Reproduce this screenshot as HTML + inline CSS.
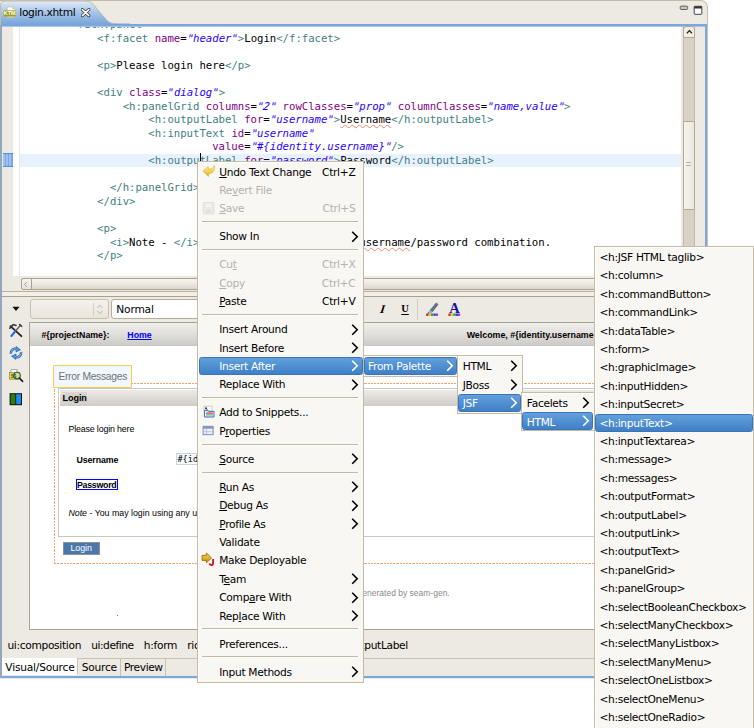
<!DOCTYPE html><html><head><meta charset="utf-8"><title>login.xhtml</title><style>
*{box-sizing:border-box;margin:0;padding:0}
html,body{width:754px;height:728px;overflow:hidden;background:#fff}
body{position:relative;font-family:"DejaVu Sans","Liberation Sans",sans-serif;font-size:10.67px;color:#000}
.abs{position:absolute}
#win{position:absolute;left:0;top:0;width:708px;height:678.5px;background:#ede9e3;border-top-right-radius:7px;overflow:hidden}
#tabbar{position:absolute;left:0;top:0;width:708px;height:24.5px;background:#ede9e3;border-top:1px solid #c4bba6;border-right:1px solid #c4bba6;border-top-right-radius:7px}
#frame{position:absolute;left:0.8px;top:23.5px;width:706.5px;height:654.3px;border:2px solid #7ba7dc;border-top-width:2.7px;border-bottom-width:2px;border-left-width:1.6px;border-right-width:2.3px;background:#ede9e3}
#edgeL{position:absolute;left:0;top:6px;width:0.9px;height:672px;background:#aaa69e}
#edgeR{position:absolute;left:707.2px;top:6px;width:0.8px;height:672px;background:#c9c0ad}
#editor{position:absolute;left:2.4px;top:26.3px;width:678.2px;height:249.7px;background:#fff;overflow:hidden}
#gutter{position:absolute;left:0;top:0;width:10.4px;height:100%;background:#ede9e3}
#gline{position:absolute;left:16.7px;top:0;width:0.9px;height:100%;background:#ece7df}
.code{position:absolute;left:18.0px;white-space:pre;font-family:"DejaVu Sans Mono","Liberation Mono",monospace;font-size:10.67px;line-height:13.6px;height:13.6px;letter-spacing:-0.023px}
.q{display:inline-block;transform:skewX(-11deg)}
.t{color:#3f7f7f}.a{color:#7f007f}.v{color:#2a00ff;font-style:italic}
.sq{text-decoration:underline wavy #ec8a70 0.45px;text-underline-offset:0.6px}
#curline{position:absolute;left:17.6px;top:127.5px;width:661px;height:13.5px;background:#e8f2fe}
.menu{position:absolute;background:#f9f7f3;border:1px solid #c5baa2;box-shadow:inset 1px 1px 0 #fff;}
.mi{position:absolute;left:0;right:0;height:18.4px;line-height:18.4px;white-space:pre}
.mi .lbl{position:absolute;top:0.8px}
.mi .acc{position:absolute;top:0.8px;right:7.6px}
.dis{color:#b5b2ac}
.hl{position:absolute;border:1px solid #3b74b8;border-radius:2.5px;background:linear-gradient(#62a0dc,#3f7fc6)}
.sep{position:absolute;height:2.1px;background:linear-gradient(#c3b8a2 0 62%,#fff 62%)}
u{text-decoration:underline;text-underline-offset:1.2px;text-decoration-thickness:0.8px}
.pg{font-family:"Liberation Sans",sans-serif}
</style></head><body>
<div id="win">
<div id="tabbar"></div>
<div id="edgeL"></div><div id="edgeR"></div><div id="frame"></div>
<svg class="abs" style="left:0;top:0" width="130" height="25" viewBox="0 0 130 25">
<defs><linearGradient id="tg" x1="0" y1="0" x2="0" y2="1"><stop offset="0" stop-color="#e3edf9"/><stop offset="0.45" stop-color="#a9c7ea"/><stop offset="1" stop-color="#76a3d8"/></linearGradient></defs>
<path d="M0,25 L0,6 Q0,0.7 5,0.7 L85,0.7 C91,0.7 93.5,4 96.5,8 L106.5,19.6 C109,22.6 111.5,23.5 117,23.5 L130,23.5 L130,25 Z" fill="url(#tg)"/>
<path d="M0.5,25 L0.5,6 Q0.5,1.1 5,1.1 L85,1.1 C91,1.1 93.5,4.4 96.5,8.4 L106.5,20 C109,23 111.5,23.6 117,23.6" fill="none" stroke="#c4bba6" stroke-width="1"/>
</svg>
<div class="abs" style="left:19.3px;top:5.6px;line-height:13px;font-size:10.67px;letter-spacing:-0.36px">login.xhtml</div>
<svg class="abs" style="left:2.5px;top:5.5px" width="14" height="13" viewBox="0 0 14 13">
<path d="M4.2,0.9 h5 l2.2,2.2 v8.4 h-7.2z" fill="#fff" stroke="#c8bc98" stroke-width="0.7"/>
<path d="M9.2,0.9 l2.2,2.2 h-2.2z" fill="#e8c860"/>
<rect x="0.6" y="4.6" width="12.2" height="5.8" rx="0.8" fill="#9c9c20" stroke="#b4b44a" stroke-width="0.5"/>
<text x="6.7" y="9.4" font-family="Liberation Sans,sans-serif" font-weight="bold" font-size="5.4" fill="#fff" text-anchor="middle">KTM</text>
</svg>
<svg class="abs" style="left:80.6px;top:7.6px" width="10" height="10" viewBox="0 0 10 10">
<path d="M1.4,1.6 L7.8,7.6 M7.8,1.6 L1.4,7.6" stroke="#3a3a3a" stroke-width="3.1" stroke-linecap="round"/>
<path d="M1.4,1.6 L7.8,7.6 M7.8,1.6 L1.4,7.6" stroke="#fff" stroke-width="1.5" stroke-linecap="round"/>
</svg>
<svg class="abs" style="left:678px;top:4px" width="27" height="13" viewBox="0 0 27 13">
<rect x="2.2" y="2.1" width="7.4" height="3.4" rx="1" fill="#c9c5bd" stroke="#555" stroke-width="0.9"/>
<rect x="16.2" y="2.3" width="7.6" height="8" rx="0.5" fill="#fff" stroke="#333" stroke-width="0.9"/>
<rect x="16.2" y="2.3" width="7.6" height="2.2" fill="#333"/>
</svg>
<div id="editor"><div id="gutter"></div><div id="gline"></div><div id="curline"></div>
<div class="code" style="top:-8.30px">        <span class="t">&lt;rich:panel&gt;</span></div>
<div class="code" style="top:5.30px">            <span class="t">&lt;f:facet</span> <span class="a">name</span>=<span class="v"><span class="q">"</span>header<span class="q">"</span></span><span class="t">&gt;</span>Login<span class="t">&lt;/f:facet&gt;</span></div>
<div class="code" style="top:32.50px">            <span class="t">&lt;p&gt;</span>Please login here<span class="t">&lt;/p&gt;</span></div>
<div class="code" style="top:59.70px">            <span class="t">&lt;div</span> <span class="a">class</span>=<span class="v"><span class="q">"</span>dialog<span class="q">"</span></span><span class="t">&gt;</span></div>
<div class="code" style="top:73.30px">                <span class="t">&lt;h:panelGrid</span> <span class="a">columns</span>=<span class="v"><span class="q">"</span><span class="q">2</span><span class="q">"</span></span> <span class="a">rowClasses</span>=<span class="v"><span class="q">"</span>prop<span class="q">"</span></span> <span class="a">columnClasses</span>=<span class="v"><span class="q">"</span>name,value<span class="q">"</span></span><span class="t">&gt;</span></div>
<div class="code" style="top:86.90px">                    <span class="t">&lt;h:outputLabel</span> <span class="a">for</span>=<span class="v"><span class="q">"</span>username<span class="q">"</span></span><span class="t">&gt;</span><span class="sq">Username</span><span class="t">&lt;/h:outputLabel&gt;</span></div>
<div class="code" style="top:100.50px">                    <span class="t">&lt;h:inputText</span> <span class="a">id</span>=<span class="v"><span class="q">"</span>username<span class="q">"</span></span></div>
<div class="code" style="top:114.10px">                              <span class="a">value</span>=<span class="v"><span class="q">"</span>#{identity.username}<span class="q">"</span></span><span class="t">/&gt;</span></div>
<div class="code" style="top:127.70px">                    <span class="t">&lt;h:outputLabel</span> <span class="a">for</span>=<span class="v"><span class="q">"</span>password<span class="q">"</span></span><span class="t">&gt;</span>Password<span class="t">&lt;/h:outputLabel&gt;</span></div>
<div class="code" style="top:154.90px">              <span class="t">&lt;/h:panelGrid&gt;</span></div>
<div class="code" style="top:168.50px">            <span class="t">&lt;/div&gt;</span></div>
<div class="code" style="top:195.70px">            <span class="t">&lt;p&gt;</span></div>
<div class="code" style="top:209.30px">              <span class="t">&lt;i&gt;</span>Note - <span class="t">&lt;/i&gt;</span> You may login using any <span class="sq">username</span>/password combination.</div>
<div class="code" style="top:222.90px">            <span class="t">&lt;/p&gt;</span></div>
<div class="abs" style="left:197.6px;top:126.7px;width:1.3px;height:13px;background:#000"></div>
<div class="abs" style="left:0.9px;top:127.2px;width:9.6px;height:13.9px;background:#85b3ea;border-top:1.1px solid #4d8ddb;border-bottom:1.1px solid #4d8ddb;background-image:repeating-linear-gradient(90deg,rgba(255,255,255,0.18) 0 1.6px,rgba(40,100,200,0.12) 1.6px 3.2px)"></div>
</div>
<div class="abs" style="left:2.4px;top:26px;width:702.6px;height:1px;background:#a9c6ea"></div>
<div class="abs" style="left:683.2px;top:26.4px;width:11.6px;height:250px;background:#d9d1c5;border-left:1px solid #c3b9a6;border-right:1px solid #c3b9a6"></div>
<div class="abs" style="left:683.2px;top:26.4px;width:11.6px;height:11.8px;background:#f1eee8;border:1px solid #b3a890;border-radius:3px 3px 0 0"></div>
<svg class="abs" style="left:685.6px;top:29.3px" width="7" height="6" viewBox="0 0 7 6"><path d="M0.9,4.3 L3.4,1.6 L5.9,4.3" fill="none" stroke="#222" stroke-width="1.3"/></svg>
<div class="abs" style="left:683.2px;top:120.6px;width:11.6px;height:89.6px;background:linear-gradient(90deg,#f6f4ef,#ebe7df);border:1px solid #b3a890;border-radius:1.5px"></div>
<div class="abs" style="left:686.3px;top:161.5px;width:5px;height:5px;background:repeating-linear-gradient(#b9b0a0 0 0.8px,transparent 0.8px 1.6px)"></div>
<div class="abs" style="left:20.5px;top:278.3px;width:675px;height:11.8px;background:linear-gradient(#f7f5f1,#ece8e1 50%,#ddd7cd);border:1px solid #aba18c;border-radius:2.5px"></div>
<div class="abs" style="left:20.5px;top:278.3px;width:11.2px;height:11.8px;border:1px solid #aba18c;border-radius:2.5px 0 0 2.5px;background:linear-gradient(#f7f5f1,#e6e2da)"></div>
<svg class="abs" style="left:23px;top:281px" width="6" height="7" viewBox="0 0 6 7"><path d="M4,0.8 L1.6,3.4 L4,6" fill="none" stroke="#aaa498" stroke-width="1"/></svg>
<div class="abs" style="left:2px;top:290.8px;width:703px;height:1.1px;background:#b9b09f"></div>
<div class="abs" style="left:2px;top:292px;width:703px;height:4px;background:#f2efe9"></div>
<div class="abs" style="left:2px;top:295.8px;width:703px;height:1.2px;background:#aaa08c"></div>
<svg class="abs" style="left:12px;top:306px" width="9" height="6" viewBox="0 0 9 6"><path d="M0.4,0.7 L7.6,0.7 L4,4.9 Z" fill="#111"/></svg>
<div class="abs" style="left:29.6px;top:299.4px;width:79.6px;height:19.9px;background:linear-gradient(#f4f2ed,#e9e5dd);border:1px solid #c9c0ae;border-radius:3px"></div>
<div class="abs" style="left:92.5px;top:302.5px;width:1px;height:13.5px;background:#d5cdbd"></div>
<svg class="abs" style="left:95.5px;top:303px" width="8" height="13" viewBox="0 0 8 13"><path d="M1.3,5 L3.8,2.2 L6.3,5 M1.3,8 L3.8,10.8 L6.3,8" fill="none" stroke="#b5aea0" stroke-width="0.9"/></svg>
<div class="abs" style="left:111.2px;top:299.4px;width:249px;height:19.9px;background:#fff;border:1px solid #b5ab98;border-radius:3px"></div>
<div class="abs" style="left:116.3px;top:302.8px;line-height:13px;letter-spacing:-0.2px">Normal</div>
<div class="abs" style="left:378px;top:302.5px;width:9px;line-height:13px;font-family:'Liberation Serif',serif;font-weight:bold;font-style:italic;font-size:12px;text-align:center;transform:skewX(-8deg)">I</div>
<div class="abs" style="left:400px;top:302.2px;width:10px;line-height:13px;font-family:'Liberation Serif',serif;font-weight:bold;font-size:10.5px;text-align:center;text-decoration:underline;text-underline-offset:1.5px">U</div>
<div class="abs" style="left:417px;top:299px;width:1px;height:21px;background:#d3cbbb"></div>
<svg class="abs" style="left:425px;top:301px" width="40" height="17" viewBox="0 0 40 17">
<path d="M5.2,9.2 L11.2,2 L13,3.4 L7.4,10.8 Z" fill="#6a7488" stroke="#3b4560" stroke-width="0.6"/>
<path d="M3,11.8 L5.2,9.2 L7.4,10.8 L5,12.6 Z" fill="#8fc4ee" stroke="#4a7ab0" stroke-width="0.5"/>
<path d="M2.2,12.8 L3.4,11.4 L4.4,12.2 Z" fill="#333"/>
<rect x="1.2" y="12.5" width="2.4" height="2.4" fill="#e01818"/><rect x="3.6" y="12.5" width="2.4" height="2.4" fill="#e8c818"/><rect x="6" y="12.5" width="2.4" height="2.4" fill="#28b028"/><rect x="8.4" y="12.5" width="2.4" height="2.4" fill="#2848e8"/><rect x="10.8" y="12.5" width="2.2" height="2.4" fill="#c028d8"/>
<text x="29.4" y="11.8" font-family="Liberation Serif,serif" font-weight="bold" font-size="14.5" fill="#14149c" text-anchor="middle">A</text>
<rect x="23.4" y="12.5" width="2.4" height="2.4" fill="#e01818"/><rect x="25.8" y="12.5" width="2.4" height="2.4" fill="#e8c818"/><rect x="28.2" y="12.5" width="2.4" height="2.4" fill="#28b028"/><rect x="30.6" y="12.5" width="2.4" height="2.4" fill="#2848e8"/><rect x="33" y="12.5" width="2.2" height="2.4" fill="#c028d8"/>
</svg>
<svg class="abs" style="left:8px;top:322px" width="17" height="86" viewBox="0 0 17 86">
<g stroke-linecap="round">
<path d="M2.4,4.2 L13.4,14.2" stroke="#222" stroke-width="1.8"/>
<path d="M1.8,6.2 L5.2,2.6 L8,3.4" stroke="#333" stroke-width="1.6" fill="none"/>
<path d="M12.6,3 L7.2,9.4" stroke="#555" stroke-width="1.3"/>
<path d="M7.2,9.4 L3.4,14" stroke="#2b6fd0" stroke-width="2.2"/>
<path d="M11.6,2.4 L13.8,4.4" stroke="#333" stroke-width="1.4"/>
</g>
<g fill="none" stroke="#2a5cab" stroke-width="2.5">
<path d="M2.9,31.8 C2.4,28.4 5.6,26 9,27.2"/>
<path d="M13.1,30 C13.6,33.6 10.4,36 7,34.8"/>
</g>
<path d="M8.2,24.6 L12.4,27.8 L8,30 Z" fill="#4b93dd" stroke="#2a5cab" stroke-width="0.7"/>
<path d="M7.8,37.4 L3.6,34.2 L8,32 Z" fill="#4b93dd" stroke="#2a5cab" stroke-width="0.7"/>
<g fill="none" stroke="#6db0ee" stroke-width="1.1">
<path d="M2.9,31.8 C2.4,28.4 5.6,26 9,27.2"/>
<path d="M13.1,30 C13.6,33.6 10.4,36 7,34.8"/>
</g>
<rect x="1.4" y="50.6" width="9.6" height="6.6" fill="#e8d84a" stroke="#8a7a10" stroke-width="0.6"/>
<path d="M3,47.6 h6 v3 h-6z" fill="#fff" stroke="#777" stroke-width="0.6"/>
<circle cx="9" cy="53.6" r="3.3" fill="#cfe6c0" fill-opacity="0.7" stroke="#2a5a2a" stroke-width="1.1"/>
<path d="M11.4,56.2 L14.6,59.4" stroke="#222" stroke-width="1.7" stroke-linecap="round"/>
<text x="5.6" y="56.2" font-family="Liberation Sans,sans-serif" font-size="4.5" font-weight="bold" fill="#2a5a2a" text-anchor="middle">S$</text>
<rect x="1.6" y="71.2" width="12.4" height="12" fill="#111"/>
<rect x="2.6" y="72.2" width="4.8" height="10" fill="#2e7d0e"/>
<rect x="8.2" y="72.2" width="4.8" height="10" fill="#1c8cf4"/>
</svg>
<div class="abs pg" style="left:29px;top:322.4px;width:680px;height:307.4px;background:#fff;border:1px solid #a8a294;overflow:hidden">
<div class="abs" style="left:0;top:0;width:680px;height:22.2px;background:linear-gradient(#efeeec,#e2e0dd 45%,#cbc9c5)"></div>
<div class="abs" style="left:11.4px;top:5.2px;font-weight:bold;font-size:8.8px;line-height:12px;white-space:pre">#{projectName}:</div>
<div class="abs" style="left:97.3px;top:5.2px;font-weight:bold;font-size:8.8px;line-height:12px;color:#0000ee;text-decoration:underline">Home</div>
<div class="abs" style="left:436.7px;top:5.2px;font-weight:bold;font-size:8.85px;line-height:12px;white-space:pre">Welcome, #{identity.username}</div>
<div class="abs" style="left:24px;top:59.55px;width:700px;height:0.9px;background:repeating-linear-gradient(90deg,#f5a274 0 2.2px,transparent 2.2px 3.2px)"></div>
<div class="abs" style="left:24px;top:239.45px;width:700px;height:0.9px;background:repeating-linear-gradient(90deg,#f5a274 0 2.2px,transparent 2.2px 3.2px)"></div>
<div class="abs" style="left:23.95px;top:59.55px;width:0.9px;height:180.8px;background:repeating-linear-gradient(180deg,#f5a274 0 2.2px,transparent 2.2px 3.2px)"></div>
<div class="abs" style="left:23.2px;top:41.8px;width:78.6px;height:22.6px;background:#f0f7fe;border:1.3px solid #f5cd4c;border-radius:1px"></div>
<div class="abs" style="left:28.4px;top:46.6px;font-size:10.3px;line-height:13px;color:#727272;white-space:pre;letter-spacing:-0.29px">Error Messages</div>
<div class="abs" style="left:28.3px;top:65.1px;width:700px;height:148.8px;border:1px solid #cbc8c1;background:#fff"></div>
<div class="abs" style="left:30.1px;top:66.3px;width:700px;height:16px;background:linear-gradient(#eceae7,#dfdcd8 50%,#cfccc7)"></div>
<div class="abs" style="left:32.2px;top:68.6px;width:25px;height:10.2px;background:rgba(120,115,105,0.13)"></div>
<div class="abs" style="left:32.6px;top:68.9px;font-weight:bold;font-size:9.1px;line-height:12px;letter-spacing:-0.12px">Login</div>
<div class="abs" style="left:38.4px;top:99.4px;font-size:8.8px;line-height:12px;letter-spacing:-0.13px;white-space:pre">Please login here</div>
<div class="abs" style="left:46.4px;top:131px;font-weight:bold;font-size:8.8px;line-height:12px;letter-spacing:-0.08px">Username</div>
<div class="abs" style="left:45.9px;top:155.2px;width:41.8px;height:11.8px;border:1.6px solid #0000ff"></div>
<div class="abs" style="left:46.9px;top:155.2px;font-weight:bold;font-size:8.8px;line-height:12px;letter-spacing:-0.25px">Password</div>
<div class="abs" style="left:146px;top:129.6px;width:186px;height:12.4px;border:1px solid #c8d4e0;background:#f8fbfe"></div>
<div class="abs" style="left:147.4px;top:130px;font-family:'DejaVu Sans Mono',monospace;font-size:8.6px;line-height:12px;white-space:pre">#{identity.username}</div>
<div class="abs" style="left:38.4px;top:184px;font-size:8.8px;line-height:12px;white-space:pre"><i>Note</i> - You may login using any username/password combination.</div>
<div class="abs" style="left:32.6px;top:218.6px;width:37.2px;height:12.8px;background:#4a78aa;border:1px solid #8d9098;color:#fff;font-size:8.8px;line-height:11px;text-align:center">Login</div>
<div class="abs" style="left:325.7px;top:264px;font-size:8.5px;line-height:12px;color:#8a8a8a;white-space:pre">Generated by seam-gen.</div>
<div class="abs" style="left:87px;top:292px;width:1px;height:1px;background:#3a8ee6"></div>
</div>
<div class="abs" style="left:2px;top:658px;width:704px;height:1px;background:#c9c1b2"></div>
<div class="abs" style="left:2.4px;top:658.2px;width:75.6px;height:16.6px;background:#fff;border-right:1px solid #c9c1b2;border-radius:0 0 2px 0"></div>
<div class="abs" style="left:120.4px;top:659px;width:1px;height:17px;background:#c9c1b2"></div>
<div class="abs" style="left:164.8px;top:659px;width:1px;height:17px;background:#c9c1b2"></div>
<div class="abs" style="left:5.30px;top:661.00px;line-height:13px;white-space:pre;letter-spacing:-0.215px;">Visual/Source</div>
<div class="abs" style="left:81.80px;top:661.00px;line-height:13px;white-space:pre;letter-spacing:-0.275px;">Source</div>
<div class="abs" style="left:124.00px;top:661.00px;line-height:13px;white-space:pre;letter-spacing:-0.405px;">Preview</div>
<div class="abs" style="left:7.40px;top:639.20px;line-height:13px;white-space:pre;letter-spacing:-0.327px;">ui:composition</div>
<div class="abs" style="left:91.20px;top:639.20px;line-height:13px;white-space:pre;letter-spacing:-0.468px;">ui:define</div>
<div class="abs" style="left:143.80px;top:639.20px;line-height:13px;white-space:pre;letter-spacing:-0.306px;">h:form</div>
<div class="abs" style="left:187.30px;top:639.20px;line-height:13px;white-space:pre;letter-spacing:-0.318px;">rich:panel</div>
<div class="abs" style="left:338.20px;top:639.20px;line-height:13px;white-space:pre;letter-spacing:-0.349px;">h:outputLabel</div>
</div>
<div class="menu" style="left:197.40px;top:161.20px;width:166.60px;height:521.60px;overflow:hidden">
<div class="mi" style="top:0.60px;color:#000;letter-spacing:-0.30px">
<span class="lbl" style="left:20.8px;margin-top:0.00px"><u>U</u>ndo Text Change</span>
<span class="acc">Ctrl+Z</span>
</div>
<div class="mi dis" style="top:19.00px;color:#b5b2ac;letter-spacing:-0.30px">
<span class="lbl" style="left:20.8px;margin-top:0.00px">Re<u>v</u>ert File</span>
</div>
<div class="mi dis" style="top:37.40px;color:#b5b2ac;letter-spacing:-0.30px">
<span class="lbl" style="left:20.8px;margin-top:0.00px"><u>S</u>ave</span>
<span class="acc">Ctrl+S</span>
</div>
<div class="sep" style="left:3.6px;right:5.2px;top:58.95px"></div>
<div class="mi" style="top:65.40px;color:#000;letter-spacing:-0.30px">
<span class="lbl" style="left:20.8px;margin-top:0.00px">Show In</span>
<svg class="abs" style="right:4.0px;top:3.3px" width="8" height="12" viewBox="0 0 8 12"><path d="M1.2,0.8 L6.2,5.8 L1.2,10.8" fill="none" stroke="#000" stroke-width="1.6"/></svg>
</div>
<div class="sep" style="left:3.6px;right:5.2px;top:86.95px"></div>
<div class="mi dis" style="top:93.40px;color:#b5b2ac;letter-spacing:-0.30px">
<span class="lbl" style="left:20.8px;margin-top:0.00px">Cu<u>t</u></span>
<span class="acc">Ctrl+X</span>
</div>
<div class="mi dis" style="top:111.80px;color:#b5b2ac;letter-spacing:-0.30px">
<span class="lbl" style="left:20.8px;margin-top:0.00px"><u>C</u>opy</span>
<span class="acc">Ctrl+C</span>
</div>
<div class="mi" style="top:130.20px;color:#000;letter-spacing:-0.30px">
<span class="lbl" style="left:20.8px;margin-top:0.00px"><u>P</u>aste</span>
<span class="acc">Ctrl+V</span>
</div>
<div class="sep" style="left:3.6px;right:5.2px;top:151.75px"></div>
<div class="mi" style="top:158.20px;color:#000;letter-spacing:-0.30px">
<span class="lbl" style="left:20.8px;margin-top:0.00px">Insert Around</span>
<svg class="abs" style="right:4.0px;top:3.3px" width="8" height="12" viewBox="0 0 8 12"><path d="M1.2,0.8 L6.2,5.8 L1.2,10.8" fill="none" stroke="#000" stroke-width="1.6"/></svg>
</div>
<div class="mi" style="top:176.60px;color:#000;letter-spacing:-0.30px">
<span class="lbl" style="left:20.8px;margin-top:0.00px">Insert Before</span>
<svg class="abs" style="right:4.0px;top:3.3px" width="8" height="12" viewBox="0 0 8 12"><path d="M1.2,0.8 L6.2,5.8 L1.2,10.8" fill="none" stroke="#000" stroke-width="1.6"/></svg>
</div>
<div class="hl" style="left:0.2px;right:0.4px;top:195.30px;height:17.90px"></div>
<div class="mi" style="top:195.00px;color:#fff;letter-spacing:-0.30px">
<span class="lbl" style="left:20.8px;margin-top:0.00px">Insert After</span>
<svg class="abs" style="right:4.0px;top:3.3px" width="8" height="12" viewBox="0 0 8 12"><path d="M1.2,0.8 L6.2,5.8 L1.2,10.8" fill="none" stroke="#fff" stroke-width="1.6"/></svg>
</div>
<div class="mi" style="top:213.40px;color:#000;letter-spacing:-0.30px">
<span class="lbl" style="left:20.8px;margin-top:0.00px">Replace With</span>
<svg class="abs" style="right:4.0px;top:3.3px" width="8" height="12" viewBox="0 0 8 12"><path d="M1.2,0.8 L6.2,5.8 L1.2,10.8" fill="none" stroke="#000" stroke-width="1.6"/></svg>
</div>
<div class="sep" style="left:3.6px;right:5.2px;top:234.95px"></div>
<div class="mi" style="top:241.40px;color:#000;letter-spacing:-0.30px">
<span class="lbl" style="left:20.8px;margin-top:0.00px">Add to Snippets...</span>
</div>
<div class="mi" style="top:259.80px;color:#000;letter-spacing:-0.30px">
<span class="lbl" style="left:20.8px;margin-top:0.00px">P<u>r</u>operties</span>
</div>
<div class="sep" style="left:3.6px;right:5.2px;top:281.35px"></div>
<div class="mi" style="top:287.80px;color:#000;letter-spacing:-0.30px">
<span class="lbl" style="left:20.8px;margin-top:0.00px"><u>S</u>ource</span>
<svg class="abs" style="right:4.0px;top:3.3px" width="8" height="12" viewBox="0 0 8 12"><path d="M1.2,0.8 L6.2,5.8 L1.2,10.8" fill="none" stroke="#000" stroke-width="1.6"/></svg>
</div>
<div class="sep" style="left:3.6px;right:5.2px;top:309.35px"></div>
<div class="mi" style="top:315.80px;color:#000;letter-spacing:-0.30px">
<span class="lbl" style="left:20.8px;margin-top:0.00px"><u>R</u>un As</span>
<svg class="abs" style="right:4.0px;top:3.3px" width="8" height="12" viewBox="0 0 8 12"><path d="M1.2,0.8 L6.2,5.8 L1.2,10.8" fill="none" stroke="#000" stroke-width="1.6"/></svg>
</div>
<div class="mi" style="top:334.20px;color:#000;letter-spacing:-0.30px">
<span class="lbl" style="left:20.8px;margin-top:0.00px"><u>D</u>ebug As</span>
<svg class="abs" style="right:4.0px;top:3.3px" width="8" height="12" viewBox="0 0 8 12"><path d="M1.2,0.8 L6.2,5.8 L1.2,10.8" fill="none" stroke="#000" stroke-width="1.6"/></svg>
</div>
<div class="mi" style="top:352.60px;color:#000;letter-spacing:-0.30px">
<span class="lbl" style="left:20.8px;margin-top:0.00px"><u>P</u>rofile As</span>
<svg class="abs" style="right:4.0px;top:3.3px" width="8" height="12" viewBox="0 0 8 12"><path d="M1.2,0.8 L6.2,5.8 L1.2,10.8" fill="none" stroke="#000" stroke-width="1.6"/></svg>
</div>
<div class="mi" style="top:371.00px;color:#000;letter-spacing:-0.30px">
<span class="lbl" style="left:20.8px;margin-top:0.00px">Validate</span>
</div>
<div class="mi" style="top:389.40px;color:#000;letter-spacing:-0.30px">
<span class="lbl" style="left:20.8px;margin-top:0.00px">Make Deployable</span>
</div>
<div class="mi" style="top:407.80px;color:#000;letter-spacing:-0.30px">
<span class="lbl" style="left:20.8px;margin-top:0.00px">T<u>e</u>am</span>
<svg class="abs" style="right:4.0px;top:3.3px" width="8" height="12" viewBox="0 0 8 12"><path d="M1.2,0.8 L6.2,5.8 L1.2,10.8" fill="none" stroke="#000" stroke-width="1.6"/></svg>
</div>
<div class="mi" style="top:426.20px;color:#000;letter-spacing:-0.30px">
<span class="lbl" style="left:20.8px;margin-top:0.00px">Comp<u>a</u>re With</span>
<svg class="abs" style="right:4.0px;top:3.3px" width="8" height="12" viewBox="0 0 8 12"><path d="M1.2,0.8 L6.2,5.8 L1.2,10.8" fill="none" stroke="#000" stroke-width="1.6"/></svg>
</div>
<div class="mi" style="top:444.60px;color:#000;letter-spacing:-0.30px">
<span class="lbl" style="left:20.8px;margin-top:0.00px">Rep<u>l</u>ace With</span>
<svg class="abs" style="right:4.0px;top:3.3px" width="8" height="12" viewBox="0 0 8 12"><path d="M1.2,0.8 L6.2,5.8 L1.2,10.8" fill="none" stroke="#000" stroke-width="1.6"/></svg>
</div>
<div class="sep" style="left:3.6px;right:5.2px;top:466.15px"></div>
<div class="mi" style="top:472.60px;color:#000;letter-spacing:-0.30px">
<span class="lbl" style="left:20.8px;margin-top:0.00px">Preferences...</span>
</div>
<div class="sep" style="left:3.6px;right:5.2px;top:494.15px"></div>
<div class="mi" style="top:500.60px;color:#000;letter-spacing:-0.30px">
<span class="lbl" style="left:20.8px;margin-top:0.00px">Input Methods</span>
<svg class="abs" style="right:4.0px;top:3.3px" width="8" height="12" viewBox="0 0 8 12"><path d="M1.2,0.8 L6.2,5.8 L1.2,10.8" fill="none" stroke="#000" stroke-width="1.6"/></svg>
</div>
<svg class="abs" style="left:0;top:0" width="20" height="520" viewBox="198.4 162.2 20 520">
<defs><linearGradient id="ug" x1="0" y1="0" x2="0" y2="1"><stop offset="0" stop-color="#fdf0a8"/><stop offset="0.6" stop-color="#f5cf4a"/><stop offset="1" stop-color="#d9a21e"/></linearGradient>
<linearGradient id="dg" x1="0" y1="0" x2="0" y2="1"><stop offset="0" stop-color="#f9d85a"/><stop offset="1" stop-color="#c8900e"/></linearGradient></defs>
<path d="M203.2,171.4 L208.6,166.6 L208.8,169.2 C211.6,169.4 213.6,168.2 214.6,165.4 C215.8,170.4 213.4,173.8 209,174 L209,176.6 Z" fill="url(#ug)" stroke="#d9a82e" stroke-width="0.5"/>
<g opacity="0.55"><rect x="203.6" y="202.8" width="10.6" height="11.2" rx="0.8" fill="#e4e2de" stroke="#c4c1bb" stroke-width="0.7"/><rect x="205.6" y="203.2" width="6.4" height="4.6" fill="#f4f3f0" stroke="#cfccc6" stroke-width="0.5"/><rect x="206" y="209.8" width="5.6" height="4" fill="#d5d2cc"/></g>
<path d="M204.4,406.4 h8.2 v5 h-8.2z" fill="#fff" stroke="#cbbf8e" stroke-width="0.8"/>
<circle cx="206.4" cy="408.4" r="1" fill="#1a2a7a"/>
<path d="M206.4,408.4 L208.6,411" stroke="#1a2a7a" stroke-width="0.7"/>
<path d="M204.8,417.2 V410.6 H208 L209,411.6 H214.4 V417.2 Z" fill="#dfe9f7" stroke="#3f6fb5" stroke-width="1"/>
<rect x="206.6" y="412.6" width="6.6" height="1.5" fill="#e85a6a"/><rect x="206.6" y="414.4" width="6.6" height="1.3" fill="#6ac46a"/>
<rect x="203.5" y="426.5" width="10" height="8.4" fill="#eef1f8" stroke="#7484aa" stroke-width="0.9"/>
<rect x="203.5" y="426.5" width="10" height="2.4" fill="#8696ba"/>
<path d="M203.5,431.9 H213.5 M207,428.9 V434.9" stroke="#9aa6c4" stroke-width="0.6"/>
<path d="M202.5,555.6 H206.8 V553.2 L211.9,558.1 L206.8,563 V560.6 H202.5 Z" fill="url(#dg)" stroke="#9a6c08" stroke-width="0.9" stroke-linejoin="round"/>
<path d="M213.5,559.2 V563.4 Q213.5,565.3 211.7,565.3 Q210.1,565.3 209.9,563.6" fill="none" stroke="#d8101a" stroke-width="1.8"/>
</svg>
</div>
<div class="menu" style="left:362.60px;top:355.20px;width:95.40px;height:21.80px;overflow:hidden">
<div class="hl" style="left:0.2px;right:0.4px;top:1.00px;height:17.90px"></div>
<div class="mi" style="top:0.70px;color:#fff;letter-spacing:-0.30px">
<span class="lbl" style="left:4.4px;margin-top:0.50px">From Palette</span>
<svg class="abs" style="right:3.4px;top:3.3px" width="8" height="12" viewBox="0 0 8 12"><path d="M1.2,0.8 L6.2,5.8 L1.2,10.8" fill="none" stroke="#fff" stroke-width="1.6"/></svg>
</div>

</div>
<div class="menu" style="left:457.20px;top:355.00px;width:65.40px;height:58.60px;overflow:hidden">
<div class="mi" style="top:0.90px;color:#000;letter-spacing:-0.30px">
<span class="lbl" style="left:4.5px;margin-top:0.60px">HTML</span>
<svg class="abs" style="right:3.8px;top:3.3px" width="8" height="12" viewBox="0 0 8 12"><path d="M1.2,0.8 L6.2,5.8 L1.2,10.8" fill="none" stroke="#000" stroke-width="1.6"/></svg>
</div>
<div class="mi" style="top:19.30px;color:#000;letter-spacing:-0.30px">
<span class="lbl" style="left:4.5px;margin-top:0.60px">JBoss</span>
<svg class="abs" style="right:3.8px;top:3.3px" width="8" height="12" viewBox="0 0 8 12"><path d="M1.2,0.8 L6.2,5.8 L1.2,10.8" fill="none" stroke="#000" stroke-width="1.6"/></svg>
</div>
<div class="hl" style="left:0.2px;right:0.4px;top:38.00px;height:17.90px"></div>
<div class="mi" style="top:37.70px;color:#fff;letter-spacing:-0.30px">
<span class="lbl" style="left:4.5px;margin-top:0.60px">JSF</span>
<svg class="abs" style="right:3.8px;top:3.3px" width="8" height="12" viewBox="0 0 8 12"><path d="M1.2,0.8 L6.2,5.8 L1.2,10.8" fill="none" stroke="#fff" stroke-width="1.6"/></svg>
</div>

</div>
<div class="menu" style="left:520.80px;top:392.40px;width:73.80px;height:38.60px;overflow:hidden">
<div class="mi" style="top:0.40px;color:#000;letter-spacing:-0.30px">
<span class="lbl" style="left:5.0px;margin-top:0.70px">Facelets</span>
<svg class="abs" style="right:3.6px;top:3.3px" width="8" height="12" viewBox="0 0 8 12"><path d="M1.2,0.8 L6.2,5.8 L1.2,10.8" fill="none" stroke="#000" stroke-width="1.6"/></svg>
</div>
<div class="hl" style="left:0.2px;right:0.4px;top:19.10px;height:17.90px"></div>
<div class="mi" style="top:18.80px;color:#fff;letter-spacing:-0.30px">
<span class="lbl" style="left:5.0px;margin-top:0.70px">HTML</span>
<svg class="abs" style="right:3.6px;top:3.3px" width="8" height="12" viewBox="0 0 8 12"><path d="M1.2,0.8 L6.2,5.8 L1.2,10.8" fill="none" stroke="#fff" stroke-width="1.6"/></svg>
</div>

</div>
<div class="menu" style="left:594.20px;top:246.20px;width:159.80px;height:500.00px;overflow:hidden">
<div class="mi" style="top:1.00px;color:#000;letter-spacing:-0.31px">
<span class="lbl" style="left:4.2px;margin-top:0.00px">&lt;h:JSF HTML taglib&gt;</span>
</div>
<div class="mi" style="top:19.40px;color:#000;letter-spacing:-0.31px">
<span class="lbl" style="left:4.2px;margin-top:0.00px">&lt;h:column&gt;</span>
</div>
<div class="mi" style="top:37.80px;color:#000;letter-spacing:-0.31px">
<span class="lbl" style="left:4.2px;margin-top:0.00px">&lt;h:commandButton&gt;</span>
</div>
<div class="mi" style="top:56.20px;color:#000;letter-spacing:-0.31px">
<span class="lbl" style="left:4.2px;margin-top:0.00px">&lt;h:commandLink&gt;</span>
</div>
<div class="mi" style="top:74.60px;color:#000;letter-spacing:-0.31px">
<span class="lbl" style="left:4.2px;margin-top:0.00px">&lt;h:dataTable&gt;</span>
</div>
<div class="mi" style="top:93.00px;color:#000;letter-spacing:-0.31px">
<span class="lbl" style="left:4.2px;margin-top:0.00px">&lt;h:form&gt;</span>
</div>
<div class="mi" style="top:111.40px;color:#000;letter-spacing:-0.31px">
<span class="lbl" style="left:4.2px;margin-top:0.00px">&lt;h:graphicImage&gt;</span>
</div>
<div class="mi" style="top:129.80px;color:#000;letter-spacing:-0.31px">
<span class="lbl" style="left:4.2px;margin-top:0.00px">&lt;h:inputHidden&gt;</span>
</div>
<div class="mi" style="top:148.20px;color:#000;letter-spacing:-0.31px">
<span class="lbl" style="left:4.2px;margin-top:0.00px">&lt;h:inputSecret&gt;</span>
</div>
<div class="hl" style="left:0.2px;right:0.4px;top:166.90px;height:17.90px"></div>
<div class="mi" style="top:166.60px;color:#fff;letter-spacing:-0.31px">
<span class="lbl" style="left:4.2px;margin-top:0.00px">&lt;h:inputText&gt;</span>
</div>
<div class="mi" style="top:185.00px;color:#000;letter-spacing:-0.31px">
<span class="lbl" style="left:4.2px;margin-top:0.00px">&lt;h:inputTextarea&gt;</span>
</div>
<div class="mi" style="top:203.40px;color:#000;letter-spacing:-0.31px">
<span class="lbl" style="left:4.2px;margin-top:0.00px">&lt;h:message&gt;</span>
</div>
<div class="mi" style="top:221.80px;color:#000;letter-spacing:-0.31px">
<span class="lbl" style="left:4.2px;margin-top:0.00px">&lt;h:messages&gt;</span>
</div>
<div class="mi" style="top:240.20px;color:#000;letter-spacing:-0.31px">
<span class="lbl" style="left:4.2px;margin-top:0.00px">&lt;h:outputFormat&gt;</span>
</div>
<div class="mi" style="top:258.60px;color:#000;letter-spacing:-0.31px">
<span class="lbl" style="left:4.2px;margin-top:0.00px">&lt;h:outputLabel&gt;</span>
</div>
<div class="mi" style="top:277.00px;color:#000;letter-spacing:-0.31px">
<span class="lbl" style="left:4.2px;margin-top:0.00px">&lt;h:outputLink&gt;</span>
</div>
<div class="mi" style="top:295.40px;color:#000;letter-spacing:-0.31px">
<span class="lbl" style="left:4.2px;margin-top:0.00px">&lt;h:outputText&gt;</span>
</div>
<div class="mi" style="top:313.80px;color:#000;letter-spacing:-0.31px">
<span class="lbl" style="left:4.2px;margin-top:0.00px">&lt;h:panelGrid&gt;</span>
</div>
<div class="mi" style="top:332.20px;color:#000;letter-spacing:-0.31px">
<span class="lbl" style="left:4.2px;margin-top:0.00px">&lt;h:panelGroup&gt;</span>
</div>
<div class="mi" style="top:350.60px;color:#000;letter-spacing:-0.31px">
<span class="lbl" style="left:4.2px;margin-top:0.00px">&lt;h:selectBooleanCheckbox&gt;</span>
</div>
<div class="mi" style="top:369.00px;color:#000;letter-spacing:-0.31px">
<span class="lbl" style="left:4.2px;margin-top:0.00px">&lt;h:selectManyCheckbox&gt;</span>
</div>
<div class="mi" style="top:387.40px;color:#000;letter-spacing:-0.31px">
<span class="lbl" style="left:4.2px;margin-top:0.00px">&lt;h:selectManyListbox&gt;</span>
</div>
<div class="mi" style="top:405.80px;color:#000;letter-spacing:-0.31px">
<span class="lbl" style="left:4.2px;margin-top:0.00px">&lt;h:selectManyMenu&gt;</span>
</div>
<div class="mi" style="top:424.20px;color:#000;letter-spacing:-0.31px">
<span class="lbl" style="left:4.2px;margin-top:0.00px">&lt;h:selectOneListbox&gt;</span>
</div>
<div class="mi" style="top:442.60px;color:#000;letter-spacing:-0.31px">
<span class="lbl" style="left:4.2px;margin-top:0.00px">&lt;h:selectOneMenu&gt;</span>
</div>
<div class="mi" style="top:461.00px;color:#000;letter-spacing:-0.31px">
<span class="lbl" style="left:4.2px;margin-top:0.00px">&lt;h:selectOneRadio&gt;</span>
</div>

</div>
</body></html>
